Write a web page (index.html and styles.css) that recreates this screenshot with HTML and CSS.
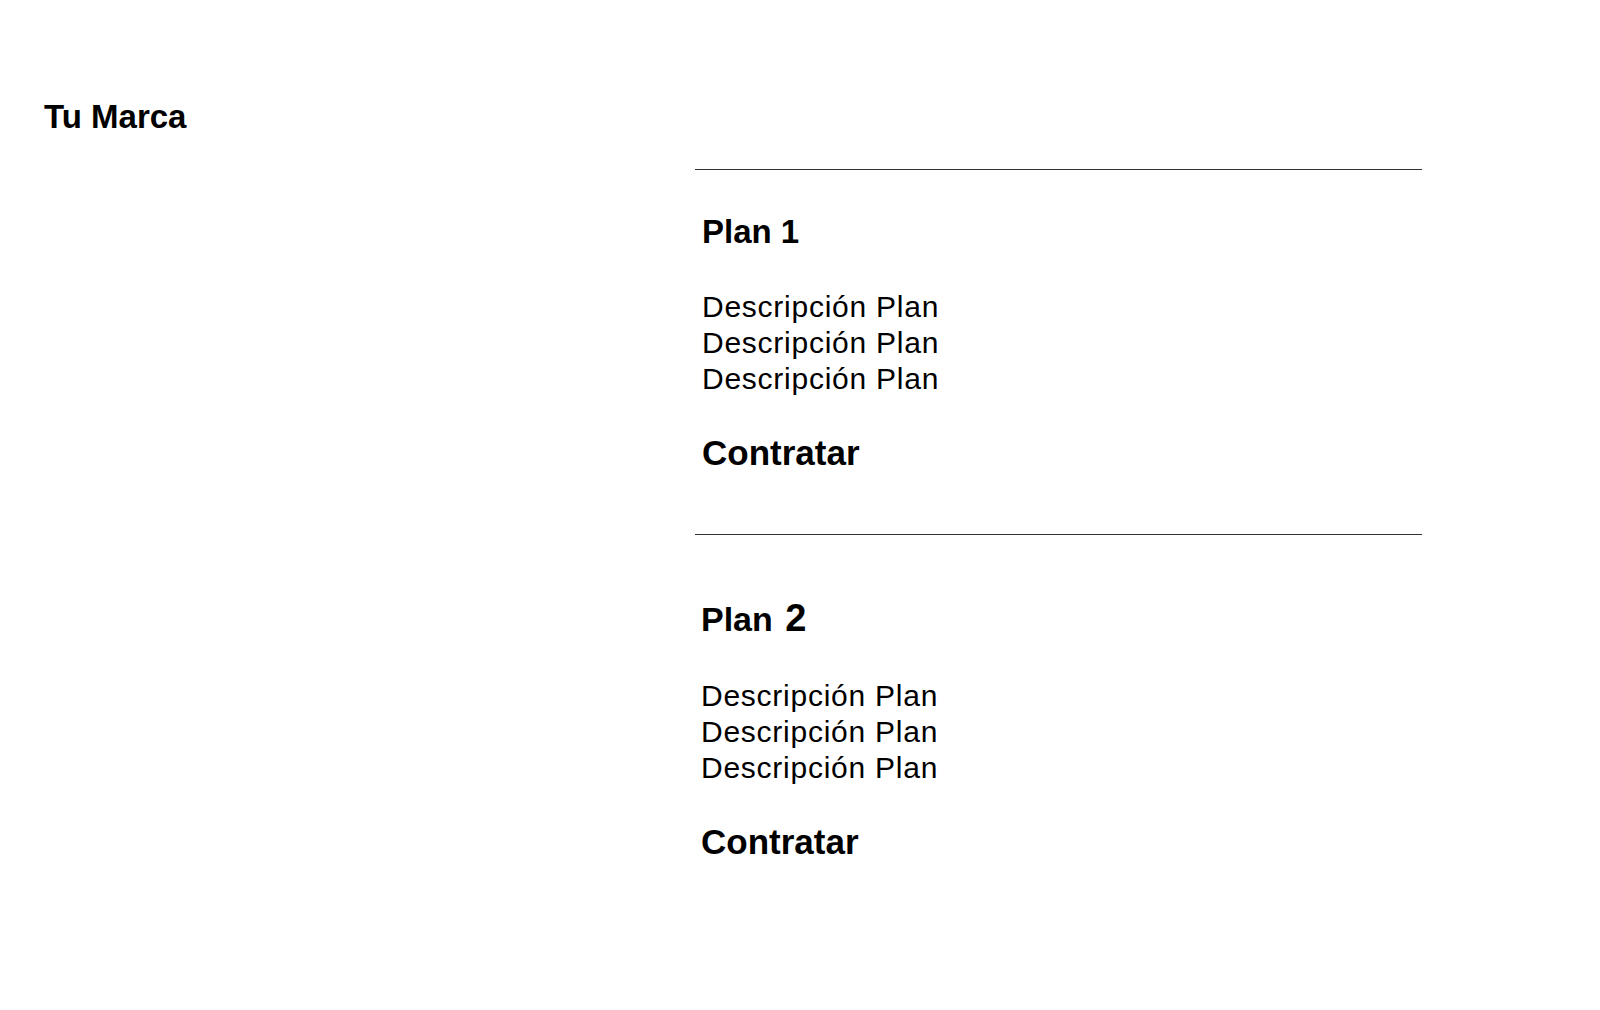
FILE: index.html
```html
<!DOCTYPE html>
<html lang="es">
<head>
<meta charset="utf-8">
<title>Tu Marca</title>
<link rel="stylesheet" href="styles.css">
</head>
<body>
<header class="topbar">
  <span class="brand">Tu Marca</span>
</header>
<main class="plans">
  <section class="plan">
    <h2 class="plan-title">Plan 1</h2>
    <div class="plan-desc">
      <p>Descripción Plan</p>
      <p>Descripción Plan</p>
      <p>Descripción Plan</p>
    </div>
    <a class="plan-cta">Contratar</a>
  </section>
  <section class="plan plan--second">
    <h2 class="plan-title plan-title--split">Plan<span class="plan-num"> 2</span></h2>
    <div class="plan-desc">
      <p>Descripción Plan</p>
      <p>Descripción Plan</p>
      <p>Descripción Plan</p>
    </div>
    <a class="plan-cta">Contratar</a>
  </section>
</main>
</body>
</html>
```
FILE: styles.css
```css
body {
  margin: 0;
  font-family: "Liberation Sans", Arial, sans-serif;
  color: #000;
  background: #fff;
}

.topbar {
  padding: 99px 0 0 44px;
}

.brand {
  display: block;
  font-size: 33px;
  font-weight: 700;
  line-height: 36px;
}

.plans {
  margin: 34px 0 0 695px;
  width: 727px;
}

.plan {
  border-top: 1px solid #333;
  padding: 44px 0 61px 7px;
}

.plan-title {
  margin: 0;
  font-size: 33px;
  font-weight: 700;
  line-height: 36px;
}

.plan-desc {
  margin-top: 39px;
}

.plan-desc p {
  margin: 0;
  font-size: 30px;
  letter-spacing: 0.75px;
  line-height: 36px;
}

.plan-cta {
  display: block;
  margin-top: 36px;
  font-size: 35px;
  font-weight: 700;
  line-height: 40px;
  color: #000;
  text-decoration: none;
}

.plan--second {
  padding-top: 64px;
  padding-left: 6px;
}

.plan-title--split {
  font-size: 34px;
  line-height: 40px;
}

.plan-num {
  font-size: 38px;
  line-height: 1;
  word-spacing: 2px;
}

.plan--second .plan-desc {
  margin-top: 39px;
}
```
